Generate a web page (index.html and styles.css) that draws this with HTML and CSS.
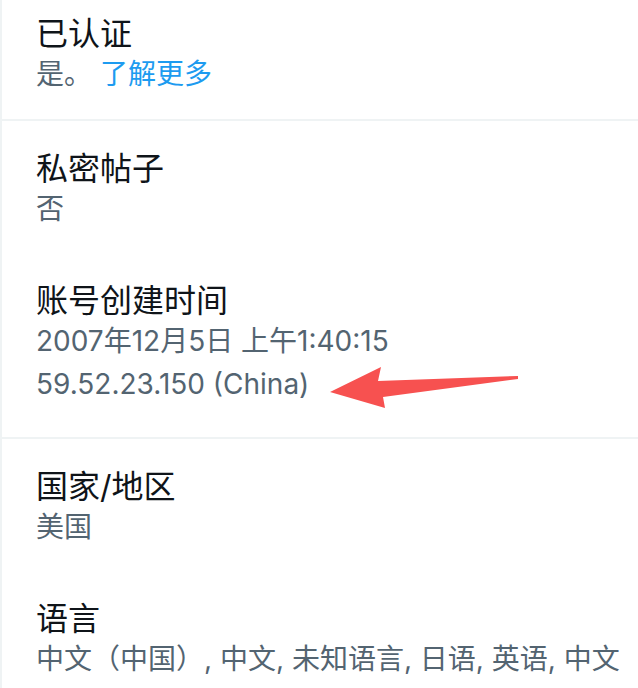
FILE: index.html
```html
<!DOCTYPE html>
<html lang="zh-CN">
<head>
<meta charset="utf-8">
<title>账号信息</title>
<link rel="stylesheet" href="styles.css">
</head>
<body>
<div class="page">
  <div class="list">
    <section class="group first">
      <div class="item">
        <div class="title">已认证</div>
        <div class="sub">是。 <a class="link" href="#">了解更多</a></div>
      </div>
    </section>
    <section class="group">
      <div class="item">
        <div class="title">私密帖子</div>
        <div class="sub">否</div>
      </div>
      <div class="item">
        <div class="title">账号创建时间</div>
        <div class="sub">2007年12月5日 上午1:40:15</div>
        <div class="sub">59.52.23.150 (China)</div>
      </div>
    </section>
    <section class="group">
      <div class="item">
        <div class="title">国家/地区</div>
        <div class="sub">美国</div>
      </div>
      <div class="item">
        <div class="title">语言</div>
        <div class="sub nowrap">中文（中国）, 中文, 未知语言, 日语, 英语, 中文</div>
      </div>
    </section>
  </div>
  <svg class="arrow" width="638" height="688" viewBox="0 0 638 688" aria-hidden="true">
    <polygon points="330,392 381,367 378,381 518,376 518,379 383,397 385,408" fill="#f75150"/>
  </svg>
</div>
</body>
</html>
```

FILE: styles.css
```css
html, body {
  margin: 0;
  padding: 0;
  background: #ffffff;
}

body {
  width: 638px;
  height: 688px;
  overflow: hidden;
  font-family: Inter, "Noto Sans CJK SC", sans-serif;
}

.page {
  position: relative;
  width: 638px;
  height: 688px;
  overflow: hidden;
}

.list {
  margin-top: -14px;
  border-left: 2px solid #eff3f4;
  display: flex;
  flex-direction: column;
}

.group {
  padding: 4px 0 5px;
  border-bottom: 2px solid #eff3f4;
  display: flex;
  flex-direction: column;
}

.group.first {
  padding-bottom: 0;
}

.item {
  padding: 25px 20px 26px 34px;
  display: flex;
  flex-direction: column;
}

.group.first .item {
  padding-bottom: 23px;
}

.title {
  font-size: 32px;
  line-height: 38px;
  color: #0f1419;
}

.sub {
  font-size: 28px;
  line-height: 43px;
  color: #536471;
}

.nowrap {
  white-space: nowrap;
}

.link {
  color: #1d9bf0;
  text-decoration: none;
}

.arrow {
  position: absolute;
  left: 0;
  top: 0;
  pointer-events: none;
}
```
